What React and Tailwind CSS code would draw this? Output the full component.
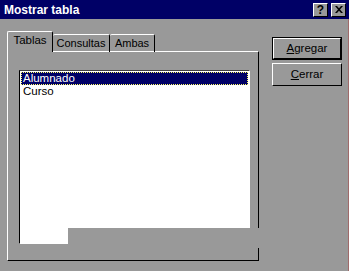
export default function App() {
  const ui = "font-['Liberation_Sans',Arial,sans-serif] text-[11px] leading-none";
  return (
    <div className={`relative w-[349px] h-[271px] overflow-hidden bg-[#999999] ${ui}`}>
      {/* Title bar */}
      <div className="flex h-[19px] items-center justify-between bg-[#000066] pl-[4px] pr-[3px]">
        <span className="text-[12px] font-bold text-white">Mostrar tabla</span>
        <div className="flex gap-[3px]">
          <TitleBtn>?</TitleBtn>
          <TitleBtn>
            <svg width="8" height="7" viewBox="0 0 8 7">
              <path d="M0 0h2l2 2.2L6 0h2L5 3.5 8 7H6L4 4.8 2 7H0l3-3.5z" fill="#000" />
            </svg>
          </TitleBtn>
        </div>
      </div>

      {/* Body */}
      <div className="flex h-[252px] border-r border-[#a06a6a] pl-[7px]">
        <div className="mt-[12px] w-[252px]">
          {/* Tabs */}
          <div className="relative z-10 -mb-px flex h-[21px] items-end">
            <div className="flex h-[21px] w-[46px] items-center justify-center rounded-t-[2px] border-l border-t border-r border-l-white border-t-white border-r-black bg-[#999999] pb-[2px] text-[11.5px] text-black">
              Tablas
            </div>
            <Tab w="w-[57px]">Consultas</Tab>
            <Tab w="w-[45px]">Ambas</Tab>
          </div>
          {/* Panel */}
          <div className="h-[210px] w-[252px] border border-t-white border-l-white border-r-black border-b-black pl-[11px] pt-[18px]">
            <div className="h-[174px] w-[231px] border border-t-[#404040] border-l-black border-r-white border-b-white bg-white p-px">
              <div className="flex h-[13px] items-center border border-dotted border-[#ffff66] bg-[#000066] pl-px text-[11.5px] text-white">
                Alumnado
              </div>
              <div className="flex h-[13px] items-center pl-[2px] text-[11.5px] text-black">Curso</div>
            </div>
          </div>
        </div>

        {/* Buttons */}
        <div className="ml-[13px] mt-[18px] flex flex-col gap-[3px]">
          <div className="h-[23px] w-[70px] border border-black">
            <div className="flex h-full items-center justify-center border border-t-white border-l-white border-r-black border-b-black text-[11.5px] text-black">
              <span><u>A</u>gregar</span>
            </div>
          </div>
          <div className="flex h-[23px] w-[70px] items-center justify-center border border-t-white border-l-white border-r-black border-b-black text-[11.5px] text-black">
            <span><u>C</u>errar</span>
          </div>
        </div>
      </div>

      {/* repaint glitch left on screen */}
      <div className="absolute left-[68px] top-[228px] h-[20px] w-[194px] bg-[#999999]" />
    </div>
  );
}

function Tab({ w, children }) {
  return (
    <div className={`flex h-[18px] ${w} items-center justify-center rounded-t-[2px] border-t border-r border-t-white border-r-black pb-[1px] text-[11px] text-black`}>
      {children}
    </div>
  );
}

function TitleBtn({ children }) {
  return (
    <div className="flex h-[14px] w-[15px] items-center justify-center border border-t-white border-l-white border-r-black border-b-black bg-[#999999] text-[12px] font-bold text-black">
      {children}
    </div>
  );
}
